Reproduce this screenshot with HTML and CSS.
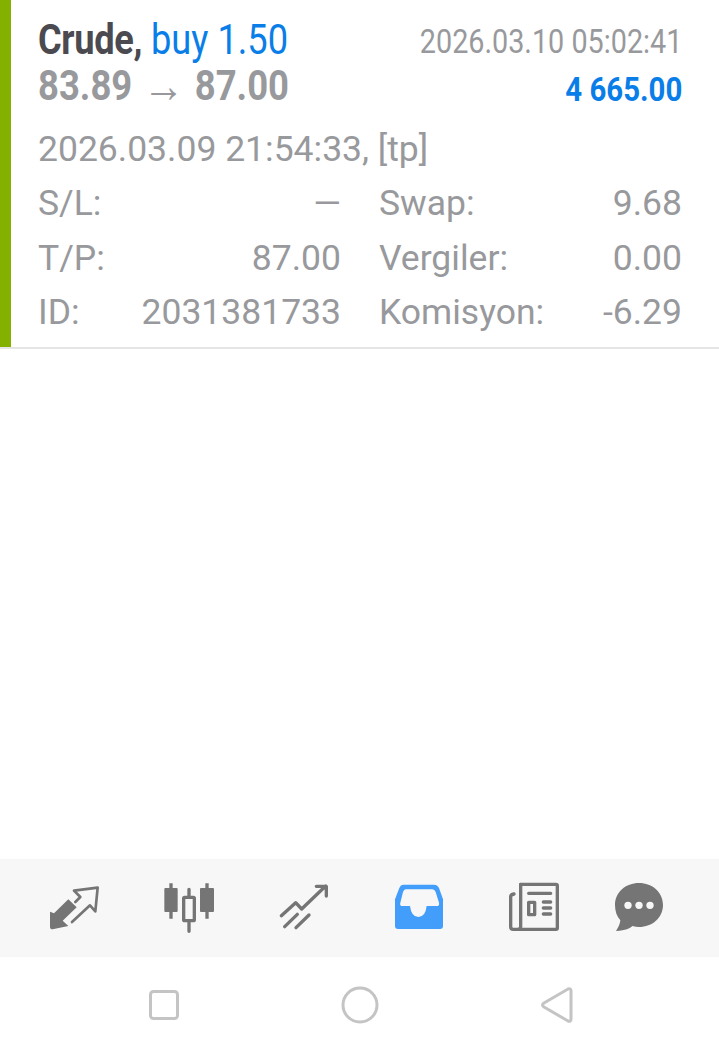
FILE: index.html
```html
<!DOCTYPE html>
<html lang="tr">
<head>
<meta charset="utf-8">
<title>Crude</title>
<link rel="stylesheet" href="styles.css">
</head>
<body>
<div class="screen">
  <section class="deal">
    <div class="deal-inner">
      <div class="head">
        <div class="head-left">
          <div class="title"><span class="cond"><b class="sym">Crude,</b> <span class="side">buy 1.50</span></span></div>
          <div class="prices"><span class="cond pr">83.89<span class="arrow">→</span>87.00</span></div>
        </div>
        <div class="head-right">
          <div class="closetime"><span class="cond-r">2026.03.10 05:02:41</span></div>
          <div class="profit"><span class="cond-r wide">4 665.00</span></div>
        </div>
      </div>
      <div class="opened">2026.03.09 21:54:33, [tp]</div>
      <div class="grid">
        <div class="kv"><span>S/L:</span><span>—</span></div>
        <div class="kv"><span>Swap:</span><span>9.68</span></div>
        <div class="kv"><span>T/P:</span><span>87.00</span></div>
        <div class="kv"><span>Vergiler:</span><span>0.00</span></div>
        <div class="kv"><span>ID:</span><span>2031381733</span></div>
        <div class="kv"><span>Komisyon:</span><span>-6.29</span></div>
      </div>
    </div>
  </section>
  <main class="empty"></main>
  <nav class="tabs">
    <svg class="ic" viewBox="132 84 180 180"><path class="f" d="M150 185L162 190L205 148L230 172L188 212L205 228L158 238Q150 238 150 230Z"/><path class="s8" d="M222 122L293 113L286 184L270 166L216 216M222 122L241 141L226 156"/></svg>
    <svg class="ic" viewBox="477 84 180 180"><path class="f" d="M508 100h10v14h12a3 3 0 0 1 3 3v66a3 3 0 0 1-3 3h-12v20h-10v-20h-12a3 3 0 0 1-3-3v-66a3 3 0 0 1 3-3h12zM616 100h10v14h13a3 3 0 0 1 3 3v66a3 3 0 0 1-3 3h-13v20h-10v-20h-13a3 3 0 0 1-3-3v-66a3 3 0 0 1 3-3h13z"/><path class="s" d="M567 118v20M567 216v28"/><rect class="s" x="551" y="142" width="32" height="70" rx="3"/></svg>
    <svg class="ic" viewBox="0 -6 180 180"><path class="s" d="M22 107L65 68L83 87L155 18M127 19H157V48M32 140L70 103M66 143L105 105"/></svg>
    <svg class="ic" viewBox="447 84 180 180"><path class="b" d="M490 104H582Q592 104 597 114L609 148V228Q609 237 600 237H474Q465 237 465 228V148L478 114Q482 104 490 104Z"/><path class="w" d="M497 118H577Q584 118 587 126L597 158Q599 168 590 168H560Q556 201 535 201Q514 201 510 168H488Q478 168 481 158L489 126Q492 118 497 118Z"/></svg>
    <svg class="ic" viewBox="72 84 180 180"><path class="s" d="M122 103H228Q232 103 232 107V234Q232 238 228 238H100Q92 238 92 230V140Q92 134 102 132"/><path class="s" d="M122 103V230Q122 238 114 238"/><path class="s" d="M146 130H212M190 156H212M190 174H212M190 192H212"/><rect class="s" x="146" y="157" width="18" height="37"/></svg>
    <svg class="ic" viewBox="15 84 180 180"><path class="f" d="M75 99C115 99 147 127 147 165C147 203 115 231 75 231C68 231 62 230 55 228C47 236 36 241 6 243C12 234 18 224 19 211C8 199 3 183 3 165C3 127 35 99 75 99Z"/><circle class="d" cx="42" cy="166" r="11"/><circle class="d" cx="75" cy="166" r="11"/><circle class="d" cx="108" cy="166" r="11"/></svg>
  </nav>
  <nav class="sysnav">
    <svg class="n" viewBox="0 0 30 30"><rect x="1.5" y="1.5" width="27" height="27" rx="3"/></svg>
    <svg class="n" viewBox="0 0 36 36"><circle cx="18" cy="18" r="17"/></svg>
    <svg class="n" viewBox="0 0 32 36"><path d="M27 2Q30 1 30 4V32Q30 35 27 34L3 20Q0 18 3 16Z"/></svg>
  </nav>
</div>
</body>
</html>
```
FILE: styles.css
```css
* { box-sizing: border-box; }
html, body { margin: 0; padding: 0; background: #fff; }
body { font-family: Roboto, "Liberation Sans", sans-serif; color: #98999c; }
.screen { width: 719px; height: 1053px; display: flex; flex-direction: column; overflow: hidden; }
.deal { height: 349px; border-bottom: 2px solid #e5e5e5; }
.deal-inner { height: 347px; border-left: 11px solid #84b000; padding: 0 37px 0 27px; }
.head { display: flex; justify-content: space-between; height: 112px; }
.title { height: 46px; padding-top: 17px; font-size: 42px; line-height: 46px; white-space: nowrap; }
.prices { font-size: 42px; font-weight: 700; line-height: 46px; margin-top: 17px; white-space: nowrap; }
.cond { display: inline-block; transform: scaleX(.862); transform-origin: left center; }
.pr { transform: scaleX(.868); }
.cond-r { display: inline-block; transform: scaleX(.846); transform-origin: right center; }
.wide { transform: scaleX(.865); }
.sym { color: #4a4a50; font-weight: 700; letter-spacing: -.4px; }
.side { color: #0a7ee8; }
.arrow { font-weight: 400; font-size: 48px; line-height: 0; margin: 0 12px; vertical-align: -2px; }
.head-right { text-align: right; white-space: nowrap; }
.closetime { font-size: 34px; line-height: 40px; margin-top: 21px; }
.profit { font-size: 34px; line-height: 40px; margin-top: 8px; font-weight: 700; color: #0a7ee8; }
.opened { font-size: 35.5px; line-height: 40px; margin-top: 17px; }
.grid { display: grid; grid-template-columns: 303px 303px; column-gap: 38px; margin-top: 14px; }
.kv { display: flex; justify-content: space-between; height: 54.5px; font-size: 35.5px; line-height: 40px; }
.empty { flex: 1; }
.tabs { height: 98px; background: #f7f7f7; display: grid; grid-template-columns: repeat(6, 115px); padding-left: 16.5px; align-items: center; justify-items: center; }
.ic { width: 60px; height: 60px; display: block; overflow: visible; }
.f { fill: #757575; stroke: none; }
.s { fill: none; stroke: #757575; stroke-width: 10; stroke-linecap: round; stroke-linejoin: round; }
.s8 { fill: none; stroke: #757575; stroke-width: 8; stroke-linecap: round; stroke-linejoin: round; }
.b { fill: #429dfb; }
.w { fill: #f7f7f7; }
.d { fill: #f7f7f7; }
.sysnav { height: 96px; background: #fff; display: flex; align-items: center; justify-content: space-between; padding: 0 146px 0 149px; }
.n { display: block; fill: none; stroke: #c4c4c4; stroke-width: 3; overflow: visible; }
.n:nth-child(1) { width: 30px; height: 30px; }
.n:nth-child(2) { width: 36px; height: 36px; }
.n:nth-child(3) { width: 32px; height: 36px; }
```
